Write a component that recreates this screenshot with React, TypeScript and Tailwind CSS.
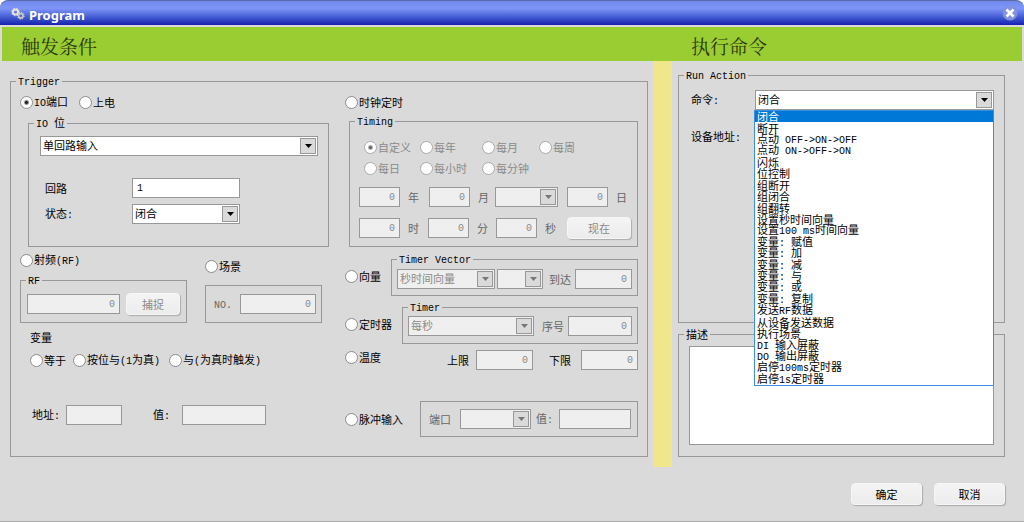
import { useState, type ReactNode } from "react";

const COMMANDS = [
  "闭合", "断开", "点动 OFF->ON->OFF", "点动 ON->OFF->ON", "闪烁", "位控制", "组断开", "组闭合", "组翻转",
  "设置秒时间向量", "设置100 ms时间向量", "变量: 赋值", "变量: 加", "变量: 减", "变量: 与", "变量: 或", "变量: 复制",
  "发送RF数据", "从设备发送数据", "执行场景", "DI 输入屏蔽", "DO 输出屏蔽", "启停100ms定时器", "启停1s定时器",
];

const BOX = "border border-[#989898]";

// Latin runs go in a half-width monospace face, like the system font does
function T({ s }: { s: string }) {
  return (
    <span className="whitespace-pre">
      {s.split(/([\x20-\x7e]+)/).map((p, i) =>
        i % 2 ? <span key={i} className="font-['Liberation_Mono',monospace] text-[10px]">{p}</span> : p)}
    </span>
  );
}

function Radio({ name, label, checked, disabled, className = "" }: {
  name: string; label: string; checked?: boolean; disabled?: boolean; className?: string;
}) {
  return (
    <label className={`flex items-center gap-px ${disabled ? "text-[#8a8a8a]" : ""} ${className}`}>
      <input type="radio" name={name} defaultChecked={checked} disabled={disabled}
        className="size-[13px] shrink-0 appearance-none rounded-full border border-[#8c8c8c] bg-white checked:bg-[radial-gradient(circle,#222_1px,#fff_3px)] disabled:border-[#aaa] disabled:checked:bg-[radial-gradient(circle,#666_1px,#fff_3px)]" />
      <T s={label} />
    </label>
  );
}

function Field({ id, label, value = "", disabled, className = "" }: {
  id: string; label?: string; value?: string; disabled?: boolean; className?: string;
}) {
  return (
    <input id={id} aria-label={label} defaultValue={value} disabled={disabled}
      className={`h-5 min-w-0 px-1 font-['Liberation_Mono',monospace] text-[10px] ${BOX} ${disabled ? "bg-[#efefef] text-right text-[#8a8a8a]" : "bg-white"} ${className}`} />
  );
}

function Combo({ id, label, options = [""], disabled, className = "" }: {
  id: string; label?: string; options?: string[]; disabled?: boolean; className?: string;
}) {
  return (
    <span className={`relative block h-5 min-w-0 ${className}`}>
      <select id={id} aria-label={label} disabled={disabled}
        className={`block size-full appearance-none pr-5 pb-0.5 pl-0.5 opacity-100 ${BOX} ${disabled ? "bg-[#efefef] text-[#8a8a8a]" : "bg-white"}`}>
        {options.map((o) => <option key={o}>{o}</option>)}
      </select>
      <span className={`pointer-events-none absolute top-0.5 right-0.5 flex h-4 w-4 items-center justify-center bg-[#dadada] ${BOX}`}>
        <svg width="7" height="4" viewBox="0 0 7 4" fill={disabled ? "#777" : "#000"}><path d="M0 0h7L3.5 4z" /></svg>
      </span>
    </span>
  );
}

function Group({ title, className = "", children }: { title: string; className?: string; children: ReactNode }) {
  return (
    <fieldset className={`min-w-0 ${BOX} ${className}`}>
      <legend className="ml-[5px] flex h-3 items-center px-0.5 text-black"><T s={title} /></legend>
      {children}
    </fieldset>
  );
}

function Btn({ children, disabled, className = "" }: { children: ReactNode; disabled?: boolean; className?: string }) {
  return (
    <button type="button" disabled={disabled}
      className={`h-[22px] rounded-[4px] border border-[#f6f6f6] bg-linear-to-b from-[#f4f4f4] to-[#ececec] shadow-[1px_1px_1px_#aaa] disabled:text-[#8a8a8a] ${className}`}>
      {children}
    </button>
  );
}

function TitleBar() {
  return (
    <header className="flex h-[25px] items-center rounded-t-[8px] border-t border-[#5a6aa8] bg-linear-to-b from-[#7088ec] via-[#8096f8] via-30% to-[#1a1cae] pt-1 pr-[6px] pl-[11px]">
      <svg width="14" height="12" viewBox="0 0 14 12" fill="none" className="mb-0.5">
        <circle cx="4.5" cy="4" r="2.6" stroke="#e8e4dc" strokeWidth="2" />
        <circle cx="4.5" cy="4" r="3.8" stroke="#e8e4dc" strokeWidth="1" strokeDasharray="1.5 1.5" />
        <circle cx="9.8" cy="7.8" r="2.2" stroke="#c9c5bc" strokeWidth="1.8" />
        <circle cx="9.8" cy="7.8" r="3.4" stroke="#d9d5cc" strokeWidth="1" strokeDasharray="1.3 1.3" />
      </svg>
      <h1 className="ml-1 flex-1 font-['Noto_Sans',sans-serif] text-[13px] font-bold text-white">Program</h1>
      <button type="button" aria-label="Close" className="mb-1">
        <svg width="16" height="16" viewBox="0 0 16 16">
          <circle cx="8" cy="8" r="7.5" fill="#8290e0" />
          <path d="M4.5 4.5l7 7m0-7l-7 7" stroke="#fff" strokeWidth="2.6" />
        </svg>
      </button>
    </header>
  );
}

function LeftTriggers() {
  return (
    <div className="min-w-0">
      <div className="mt-2 ml-[9px] flex h-[14px] gap-[11px]">
        <Radio name="trigger" label="IO端口" checked />
        <Radio name="trigger" label="上电" />
      </div>
      <Group title="IO 位" className="mt-2 mr-4 ml-[17px] h-[130px]">
        <Combo id="io" label="IO 位" options={["单回路输入"]} className="mt-[7px] mr-[10px] ml-[11px]" />
        <div className="mt-[22px] ml-4 grid grid-cols-[87px_108px] items-center gap-y-[6px]">
          <label htmlFor="loop">回路</label>
          <Field id="loop" value="1" />
          <label htmlFor="state"><T s="状态:" /></label>
          <Combo id="state" options={["闭合", "断开"]} />
        </div>
      </Group>
      <div className="mr-[23px] ml-[9px] flex justify-between">
        <div className="w-[167px]">
          <Radio name="trigger" label="射频(RF)" className="mt-[6px] h-[14px]" />
          <Group title="RF" className="mt-[7px] h-[49px]">
            <div className="mx-[6px] flex gap-[6px] pt-2">
              <Field id="rf" label="RF" value="0" disabled className="flex-1" />
              <Btn disabled className="-mt-px w-[54px]">捕捉</Btn>
            </div>
          </Group>
        </div>
        <div className="w-[117px]">
          <Radio name="trigger" label="场景" className="mt-3 h-[14px]" />
          <div className={`mt-3 flex h-[38px] items-center px-[5px] ${BOX}`}>
            <label htmlFor="no" className="ml-[3px] w-[26px] text-[#666]"><T s="NO." /></label>
            <Field id="no" value="0" disabled className="flex-1" />
          </div>
        </div>
      </div>
      <h3 className="mt-2 ml-[19px] h-[14px]">变量</h3>
      <div className="mt-2 ml-[19px] flex h-[14px]">
        <Radio name="trigger" label="等于" className="w-[43px]" />
        <Radio name="trigger" label="按位与(1为真)" className="w-24" />
        <Radio name="trigger" label="与(为真时触发)" />
      </div>
      <div className="mt-[38px] ml-[21px] flex items-center">
        <label htmlFor="addr" className="w-[34px]"><T s="地址:" /></label>
        <Field id="addr" disabled className="w-[56px]" />
        <label htmlFor="val" className="ml-[31px] w-[29px]"><T s="值:" /></label>
        <Field id="val" disabled className="w-[84px]" />
      </div>
    </div>
  );
}

function RightTriggers() {
  return (
    <div className="min-w-0 pr-[9px]">
      <Radio name="trigger" label="时钟定时" className="mt-2 h-[14px]" />
      <Group title="Timing" className="mt-[6px] ml-1 h-[132px] text-[#666]">
        <div className="mt-[13px] ml-[14px] grid grid-cols-[56px_62px_57px_auto] gap-y-[7px]">
          <Radio name="period" label="自定义" checked disabled className="h-[14px]" />
          <Radio name="period" label="每年" disabled />
          <Radio name="period" label="每月" disabled />
          <Radio name="period" label="每周" disabled />
          <Radio name="period" label="每日" disabled className="h-[14px]" />
          <Radio name="period" label="每小时" disabled />
          <Radio name="period" label="每分钟" disabled />
        </div>
        <div className="mt-3 mr-[6px] ml-[9px] flex items-center">
          <Field id="year" value="0" disabled className="w-[41px]" />
          <label htmlFor="year" className="w-[29px] pl-2">年</label>
          <Field id="month" value="0" disabled className="w-[41px]" />
          <label htmlFor="month" className="w-[25px] pl-2">月</label>
          <Combo id="weekday" label="星期" disabled className="w-[63px]" />
          <Field id="day" value="0" disabled className="ml-[9px] w-[41px]" />
          <label htmlFor="day" className="pl-2">日</label>
        </div>
        <div className="mt-[10px] mr-[6px] ml-[9px] flex items-center">
          <Field id="hour" value="0" disabled className="w-[41px]" />
          <label htmlFor="hour" className="w-[28px] pl-2">时</label>
          <Field id="minute" value="0" disabled className="w-[41px]" />
          <label htmlFor="minute" className="w-[27px] pl-2">分</label>
          <Field id="second" value="0" disabled className="w-[41px]" />
          <label htmlFor="second" className="w-[30px] pl-2">秒</label>
          <Btn disabled className="w-[64px]">现在</Btn>
        </div>
      </Group>
      <div className="mt-[6px] flex">
        <Radio name="trigger" label="向量" className="mt-4 h-[14px] w-[46px]" />
        <Group title="Timer Vector" className="h-[43px] flex-1 text-[#666]">
          <div className="mx-[5px] flex items-center pt-1">
            <Combo id="vec" label="向量" options={["秒时间向量"]} disabled className="w-[98px]" />
            <Combo id="vecno" label="向量序号" disabled className="ml-0.5 w-[46px]" />
            <label htmlFor="reach" className="w-8 pl-[6px]">到达</label>
            <Field id="reach" value="0" disabled className="flex-1" />
          </div>
        </Group>
      </div>
      <div className="mt-[5px] flex">
        <Radio name="trigger" label="定时器" className="mt-4 h-[14px] w-[57px]" />
        <Group title="Timer" className="h-[43px] flex-1 text-[#666]">
          <div className="mx-[5px] flex items-center pt-[3px]">
            <Combo id="timer" label="定时器" options={["每秒"]} disabled className="w-[126px]" />
            <label htmlFor="seq" className="w-[34px] pl-2">序号</label>
            <Field id="seq" value="0" disabled className="flex-1" />
          </div>
        </Group>
      </div>
      <div className="mt-[6px] flex items-center">
        <Radio name="trigger" label="温度" className="-mt-[6px] h-[14px] flex-1" />
        <label htmlFor="upper" className="w-[29px]">上限</label>
        <Field id="upper" value="0" disabled className="w-[57px]" />
        <label htmlFor="lower" className="w-12 pl-4">下限</label>
        <Field id="lower" value="0" disabled className="w-[57px]" />
      </div>
      <div className="mt-[31px] flex items-center">
        <Radio name="trigger" label="脉冲输入" className="h-[14px] w-[75px] shrink-0" />
        <div className={`flex h-9 min-w-0 flex-1 items-center px-[6px] text-[#666] ${BOX}`}>
          <label htmlFor="port" className="w-[33px] shrink-0 pl-0.5">端口</label>
          <Combo id="port" disabled className="w-[71px] shrink-0" />
          <label htmlFor="pulse" className="w-7 shrink-0 pl-[5px]"><T s="值:" /></label>
          <Field id="pulse" disabled className="flex-1" />
        </div>
      </div>
    </div>
  );
}

function ActionPanel() {
  const [cmd, setCmd] = useState(0);
  return (
    <section className="mr-[19px] ml-[6px] pt-2">
      <Group title="Run Action" className="h-[254px]">
        <div className="mt-[9px] mr-[10px] ml-3 grid grid-cols-[64px_1fr] items-center gap-y-[17px]">
          <label htmlFor="cmd"><T s="命令:" /></label>
          <div className="relative">
            <Combo id="cmd" options={[COMMANDS[cmd]]} />
            <ul role="listbox" aria-label="命令" className="absolute top-full right-0 -left-px z-10 grid h-[276px] auto-rows-fr border border-[#3c8fdc] bg-white">
              {COMMANDS.map((c, i) => (
                <li key={c} role="option" aria-selected={i === cmd} onClick={() => setCmd(i)}
                  className={`flex min-h-0 items-center pl-0.5 leading-[11px] ${i === cmd ? "bg-[#0078d7] text-white" : ""}`}>
                  <T s={c} />
                </li>
              ))}
            </ul>
          </div>
          <label htmlFor="dev"><T s="设备地址:" /></label>
          <Field id="dev" />
        </div>
      </Group>
      <Group title="描述" className="mt-[5px] h-[129px]">
        <textarea aria-label="描述" className={`mx-[10px] mt-[6px] block h-[99px] w-[calc(100%-20px)] resize-none bg-white ${BOX}`} />
      </Group>
    </section>
  );
}

export default function App() {
  return (
    <div className="bg-white font-['Noto_Sans_CJK_SC',sans-serif] text-[11px] leading-[12px] text-black">
      <div className="flex min-h-screen flex-col rounded-t-[8px] border-b border-[#a8a8a8] bg-[#dadada]">
        <TitleBar />
        <div className="mx-0.5 mt-0.5 grid h-[34px] grid-cols-[670fr_331fr] items-center bg-[#9acd32] pt-1 pl-[19px] font-['Noto_Serif_CJK_SC','Noto_Sans_CJK_SC',serif] text-[19px] text-[#2c3a10]">
          <h2>触发条件</h2>
          <h2>执行命令</h2>
        </div>
        <main className="grid grid-cols-[653fr_19px_352fr]">
          <section className="mr-[5px] ml-[10px] pt-[14px] pb-[10px]">
            <Group title="Trigger" className="h-[382px]">
              <div className="grid grid-cols-[334fr_302fr]">
                <LeftTriggers />
                <RightTriggers />
              </div>
            </Group>
          </section>
          <div className="bg-[#f0e68c]" />
          <ActionPanel />
        </main>
        <footer className="mt-4 mr-[19px] flex justify-end gap-3">
          <Btn className="w-[71px]">确定</Btn>
          <Btn className="w-[71px]">取消</Btn>
        </footer>
      </div>
    </div>
  );
}
